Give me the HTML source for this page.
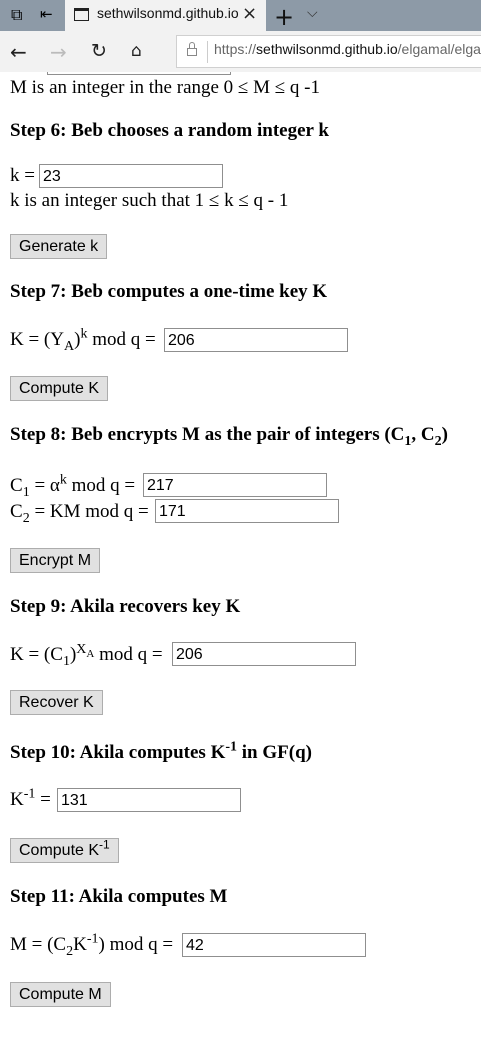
<!DOCTYPE html>
<html><head><style>
*{margin:0;padding:0;box-sizing:border-box}
html,body{overflow:hidden}
body{width:481px;height:1037px;background:#fff;position:relative;font-family:"Liberation Serif",serif;font-size:19px;color:#000}
.a{position:absolute;white-space:nowrap;line-height:22px}
.h{font-weight:bold}
.in{position:absolute;height:24px;border:1px solid #8f8f8f;background:#fff;font:16px "Liberation Sans",sans-serif;padding:2px 3px;line-height:19px;width:184px}
.b{position:absolute;height:25px;border:1px solid #adadad;background:#e1e1e1;font:16px "Liberation Sans",sans-serif;padding:0 8px;line-height:23px;color:#000;white-space:nowrap}
sub,sup{font-size:14px;line-height:0}
</style></head><body>
<div style="position:absolute;left:0;top:0;width:481px;height:31px;background:#8d9aa7"></div>
<div style="position:absolute;left:65px;top:0;width:201px;height:31px;background:#f2f2f2"></div>
<div class="a" style="left:11px;top:5px;font:16px 'DejaVu Sans',sans-serif">⧉</div>
<div class="a" style="left:40px;top:5px;font:15px 'DejaVu Sans',sans-serif">⇤</div>
<div style="position:absolute;left:74px;top:8px;width:15px;height:13px;border:1px solid #222;border-top-width:3px"></div>
<div class="a" style="left:97px;top:5px;font:14px 'Liberation Sans',sans-serif;color:#111">sethwilsonmd.github.io</div>
<div class="a" style="left:242px;top:3px;font:18px 'DejaVu Sans',sans-serif;color:#222">×</div>
<div class="a" style="left:274px;top:3px;font:24px 'DejaVu Sans',sans-serif;color:#111">+</div>
<div class="a" style="left:307px;top:5px;font:14px 'DejaVu Sans',sans-serif;color:#333">⌵</div>
<div style="position:absolute;left:0;top:31px;width:481px;height:41px;background:#f2f2f2"></div>
<div class="a" style="left:10px;top:40px;font:20px 'DejaVu Sans',sans-serif;color:#222">←</div>
<div class="a" style="left:50px;top:40px;font:20px 'DejaVu Sans',sans-serif;color:#bbb">→</div>
<div class="a" style="left:91px;top:40px;font:19px 'DejaVu Sans',sans-serif;color:#222">↻</div>
<div class="a" style="left:131px;top:41px;font:17px 'DejaVu Sans',sans-serif;color:#222">⌂</div>
<div style="position:absolute;left:176px;top:35px;width:310px;height:33px;background:#fff;border:1px solid #d0d0d0;overflow:hidden">
<div style="position:absolute;left:10px;top:12px;width:10px;height:8px;border:1px solid #888"></div>
<div style="position:absolute;left:12px;top:6px;width:6px;height:7px;border:1px solid #888;border-bottom:none;border-radius:3px 3px 0 0"></div>
<div style="position:absolute;left:30px;top:5px;width:1px;height:22px;background:#ccc"></div>
<div class="a" style="left:37px;top:5px;font:14px 'Liberation Sans',sans-serif;color:#666">https://<span style="color:#111">sethwilsonmd.github.io</span>/elgamal/elgamal</div>
</div>
<div style="position:absolute;left:47px;top:72px;width:184px;height:3px;border:1px solid #8f8f8f;border-top:none"></div>

<div class="a" style="left:10px;top:77px">M is an integer in the range 0 ≤ M ≤ q -1</div>
<div class="a h" style="left:10px;top:120px">Step 6: Beb chooses a random integer k</div>
<div class="a" style="left:10px;top:165px">k =</div>
<div class="in" style="left:39px;top:164px">23</div>
<div class="a" style="left:10px;top:190px">k is an integer such that 1 ≤ k ≤ q - 1</div>
<div class="b" style="left:10px;top:234px">Generate k</div>
<div class="a h" style="left:10px;top:281px">Step 7: Beb computes a one-time key K</div>
<div class="a" style="left:10px;top:329px">K = (Y<sub>A</sub>)<sup>k</sup> mod q =</div>
<div class="in" style="left:164px;top:328px">206</div>
<div class="b" style="left:10px;top:376px">Compute K</div>
<div class="a h" style="left:10px;top:424px">Step 8: Beb encrypts M as the pair of integers (C<sub>1</sub>, C<sub>2</sub>)</div>
<div class="a" style="left:10px;top:475px">C<sub>1</sub> = α<sup>k</sup> mod q =</div>
<div class="in" style="left:143px;top:473px">217</div>
<div class="a" style="left:10px;top:501px">C<sub>2</sub> = KM mod q =</div>
<div class="in" style="left:155px;top:499px">171</div>
<div class="b" style="left:10px;top:548px">Encrypt M</div>
<div class="a h" style="left:10px;top:596px">Step 9: Akila recovers key K</div>
<div class="a" style="left:10px;top:644px">K = (C<sub>1</sub>)<sup>X<sub style="font-size:11px">A</sub></sup> mod q =</div>
<div class="in" style="left:172px;top:642px">206</div>
<div class="b" style="left:10px;top:690px">Recover K</div>
<div class="a h" style="left:10px;top:742px">Step 10: Akila computes K<sup>-1</sup> in GF(q)</div>
<div class="a" style="left:10px;top:789px">K<sup>-1</sup> =</div>
<div class="in" style="left:57px;top:788px">131</div>
<div class="b" style="left:10px;top:838px">Compute K<sup style="font-size:12px">-1</sup></div>
<div class="a h" style="left:10px;top:886px">Step 11: Akila computes M</div>
<div class="a" style="left:10px;top:934px">M = (C<sub>2</sub>K<sup>-1</sup>) mod q =</div>
<div class="in" style="left:182px;top:933px">42</div>
<div class="b" style="left:10px;top:982px">Compute M</div>
</body></html>
